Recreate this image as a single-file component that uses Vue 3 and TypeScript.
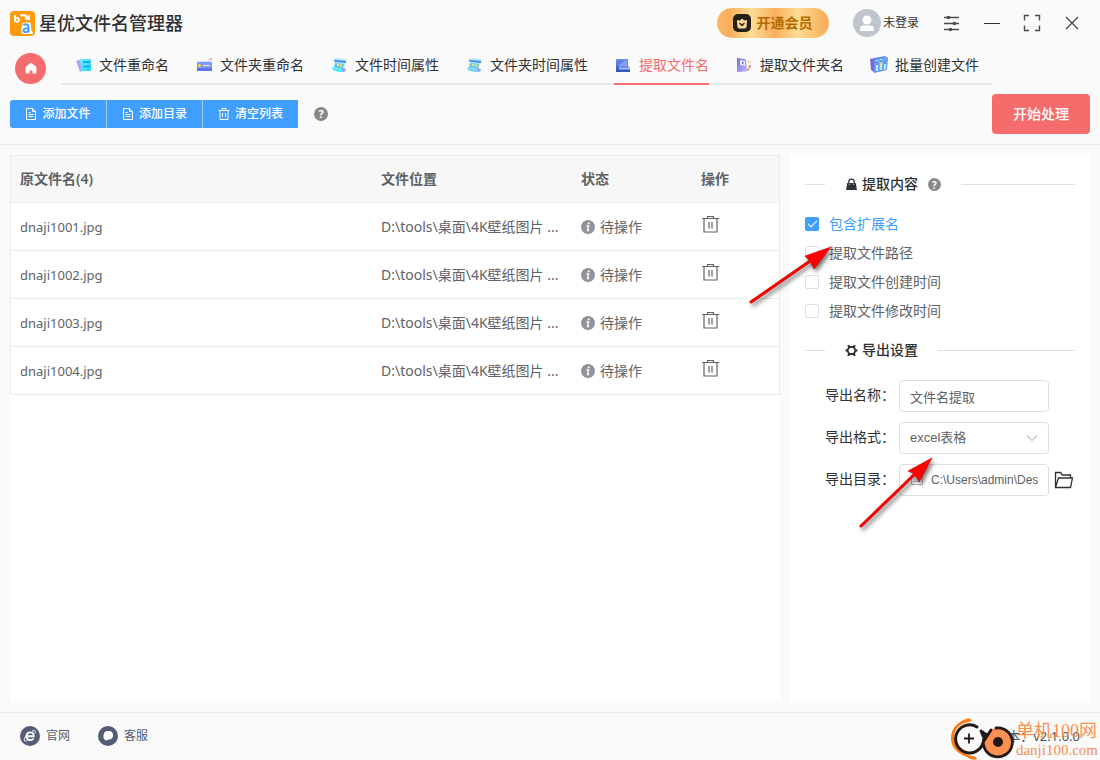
<script setup lang="ts">
import { ref } from 'vue'

interface Tab { id: string; label: string }
interface Row { name: string; path: string; status: string }
interface Option { id: string; label: string; checked: boolean }

const tabs: Tab[] = [
  { id: 'rename', label: '文件重命名' },
  { id: 'folder', label: '文件夹重命名' },
  { id: 'time', label: '文件时间属性' },
  { id: 'foldertime', label: '文件夹时间属性' },
  { id: 'extract', label: '提取文件名' },
  { id: 'extractfolder', label: '提取文件夹名' },
  { id: 'create', label: '批量创建文件' },
]
const active = ref('extract')

const rows = ref<Row[]>(
  ['dnaji1001.jpg', 'dnaji1002.jpg', 'dnaji1003.jpg', 'dnaji1004.jpg'].map((name) => ({
    name,
    path: 'D:\\tools\\桌面\\4K壁纸图片 ...',
    status: '待操作',
  })),
)

const options = ref<Option[]>([
  { id: 'ext', label: '包含扩展名', checked: true },
  { id: 'path', label: '提取文件路径', checked: false },
  { id: 'ctime', label: '提取文件创建时间', checked: false },
  { id: 'mtime', label: '提取文件修改时间', checked: false },
])

const exportName = ref('文件名提取')
const exportFormat = ref('excel')
const exportDir = ref('C:\\Users\\admin\\Des')

function removeRow(index: number) {
  rows.value.splice(index, 1)
}
</script>

<template>
  <div class="app">
    <header class="titlebar">
      <svg class="logo" viewBox="0 0 25 25" aria-hidden="true">
        <rect width="25" height="25" rx="4" fill="#ff9c0a" />
        <path d="M5 4v7M5 8.800a2 2 0 1 1 0 .1" fill="none" stroke="#fff" stroke-width="1.800" />
        <path d="M10.500 4.800c3-1.200 5.500-.5 7 2" fill="none" stroke="#fff" stroke-width="2.200" />
        <path d="M14 8l6 1.500V3.500z" fill="#fff" />
        <path d="M13 11.500h7.500l1 8.500 1.500 1v2H12l-1-5 1-3z" fill="#fff" />
        <path d="M13.500 14.200c2-1.500 5-1 5 1.300v6M18.500 17.200c-3-.3-5 .5-5 2.200 0 2.200 3.600 2.300 5 .3" fill="none" stroke="#409eff" stroke-width="2" />
      </svg>
      <h1 class="title">星优文件名管理器</h1>
      <button class="vip" type="button">
        <svg viewBox="0 0 18 18" aria-hidden="true">
          <rect width="18" height="18" rx="5" fill="#252117" />
          <path d="M4.500 6.500l2.300.5L9 5l2.200 2 2.300-.5-.5 6.500q-.1 1-1 1H6q-.9 0-1-1z" fill="#fbd79a" stroke="#fbd79a" stroke-linejoin="round" />
          <path d="M7 9.500l2 2 2-2" fill="none" stroke="#252117" stroke-width="1.500" stroke-linecap="round" />
        </svg>
        <span>开通会员</span>
      </button>
      <button class="user" type="button">
        <svg viewBox="0 0 28 28" aria-hidden="true">
          <circle cx="14" cy="14" r="14" fill="#c0c4cc" />
          <circle cx="14" cy="11" r="4.500" fill="#fff" />
          <path d="M7 21v-1.500q0-3 3-3h8q3 0 3 3V21q0 1-1 1H8q-1 0-1-1z" fill="#fff" />
        </svg>
        <span>未登录</span>
      </button>
      <div class="controls">
        <button type="button" aria-label="设置">
          <svg viewBox="0 0 20 20"><path d="M2 4.500h15M2 10.500h15M2 16.500h15" stroke="#4a4c50" stroke-width="1.300" /><circle cx="6.500" cy="4.500" r="1.800" fill="#4a4c50" /><circle cx="12.500" cy="10.500" r="1.800" fill="#4a4c50" /><circle cx="8.500" cy="16.500" r="1.800" fill="#4a4c50" /></svg>
        </button>
        <button type="button" aria-label="最小化">
          <svg viewBox="0 0 20 20"><path d="M2 10.500h16" stroke="#303133" /></svg>
        </button>
        <button type="button" aria-label="最大化">
          <svg viewBox="0 0 20 20"><path d="M2.500 7.500V2.500h4.500M13 2.500h4.500v5M17.500 12.500v5h-4.500M7 17.500H2.500v-5" fill="none" stroke="#4a4c50" stroke-width="1.400" /></svg>
        </button>
        <button type="button" aria-label="关闭">
          <svg viewBox="0 0 20 20"><path d="M4 4l12 12M16 4L4 16" stroke="#404246" stroke-width="1.200" /></svg>
        </button>
      </div>
    </header>

    <nav class="nav">
      <button class="home" type="button" aria-label="首页">
        <svg viewBox="0 0 12 12"><path d="M6 .5L.6 5v5.500q0 1 1 1H4.500V8.500h3v3h2.900q1 0 1-1V5z" fill="#fff" /></svg>
      </button>
      <div class="tabs" role="tablist">
        <button
          v-for="tab in tabs" :key="tab.id" class="tab" :class="{ active: tab.id === active }"
          type="button" role="tab" :aria-selected="tab.id === active" @click="active = tab.id"
        >
          <span class="tab-inner">
            <svg viewBox="0 0 18 18" aria-hidden="true">
              <defs>
                <linearGradient id="cyan" x1="0" y1="0" x2="1" y2="1"><stop offset="0" stop-color="#69f5ff" /><stop offset="1" stop-color="#1bd4fa" /></linearGradient>
                <linearGradient id="blue" x1="0" y1="0" x2="0" y2="1"><stop offset="0" stop-color="#7093fa" /><stop offset="1" stop-color="#2f4db4" /></linearGradient>
                <linearGradient id="violet" x1="0" y1="0" x2="1" y2="1"><stop offset="0" stop-color="#7665df" /><stop offset="1" stop-color="#b9bbff" /></linearGradient>
              </defs>
              <template v-if="tab.id === 'rename'">
                <path d="M2 5l6-2 3 9-5 4z" fill="#a8a8fb" />
                <path d="M8 3h8q1 0 1 1v9.500Q17 15 15 15H7q1-1 1-3L6 5q0-2 2-2z" fill="url(#cyan)" />
                <path d="M9 6h7M9.500 10.500h6" stroke="#1596dc" stroke-width="1.300" />
              </template>
              <template v-else-if="tab.id === 'folder'">
                <path d="M2 5h10l1-2h4v5H2z" fill="#dfe2fd" />
                <path d="M14 3h3" stroke="#f6b0aa" stroke-width="1.500" />
                <rect x="2" y="6" width="15" height="9" rx="1" fill="#7699fa" />
                <path d="M2 12h15v3H2z" fill="#6572ee" />
                <circle cx="4.500" cy="9.500" r="1.500" fill="#ffdc27" />
                <path d="M8 9.500h7" stroke="#f0dfb0" stroke-width="1.300" />
              </template>
              <template v-else-if="tab.id === 'time' || tab.id === 'foldertime'">
                <path d="M5 2l10 1q2 0 1 2l-2 6H4l1-5Q3 3 5 2z" fill="#b9e4fc" />
                <path d="M4 4l12 1v2L4 5.500z" fill="#318ee1" />
                <path d="M5 7l9 1-1 5-9-1z" fill="#65c9f2" />
                <path d="M7 9h2M11 8.500v2" stroke="#ffe06b" stroke-width="2" />
                <path d="M2 11q4 3 11 1l3 3q-5 2-11 0-3-1-3-4z" :fill="tab.id === 'time' ? '#42eff6' : '#7fd5f5'" />
                <path d="M12 12q4 0 4 2l-2 2q-2 0-2-4z" fill="#a69bf5" />
              </template>
              <template v-else-if="tab.id === 'extract'">
                <path d="M2 3h12v7l2 2v4H2z" fill="url(#blue)" />
                <path d="M4.500 4.500h9v6h-9z" fill="#829ffa" />
                <path d="M4.500 4.500h6l-6 5z" fill="#5c78da" />
                <path d="M5 11.500h11v2H5z" fill="#aabfff" />
                <path d="M2 14h14v2H3z" fill="#3159c4" />
              </template>
              <template v-else-if="tab.id === 'extractfolder'">
                <path d="M12 5q5 0 4 3t-1 6l-4 2z" fill="#fff0e8" />
                <path d="M12.500 5.500l3 1" stroke="#f5cf7a" stroke-width="1.800" />
                <path d="M15 9l-.5 3M12 14l2-1" stroke="#ee706c" stroke-width="1.500" />
                <path d="M2 2l9 1.500 1 12-10 .5z" fill="url(#violet)" />
                <path d="M5 4l5 1v5L5 9z" fill="#eef0ff" />
                <path d="M7 5.500l1.500.5v2.500L7 8z" fill="#7768d8" />
              </template>
              <template v-else>
                <path d="M0 3l5-1v15l-4-3z" fill="#8067d8" />
                <path d="M4 2l11-2 3 2-1 12-13 3z" fill="#658df1" />
                <path d="M7 4v11M11 3v11M15 2.500v11" stroke="#a9edff" stroke-width="2.600" />
                <path d="M7 5v4M11 4v4M15 3v5" stroke="#387edb" stroke-width="1.500" />
                <path d="M11 6v5" stroke="#ffe278" stroke-width="1.500" />
              </template>
            </svg>
            <span>{{ tab.label }}</span>
          </span>
        </button>
      </div>
    </nav>

    <div class="toolbar">
      <div class="btn-group">
        <button v-for="label in ['添加文件', '添加目录']" :key="label" type="button">
          <svg viewBox="0 0 12 12" aria-hidden="true"><path d="M1.500.5h6l3 3v8h-9zM7.500.5v3h3M3.500 4.500h2M3.500 6.500h5M3.500 8.500h5" fill="none" stroke="#fff" /></svg>
          <span>{{ label }}</span>
        </button>
        <button type="button">
          <svg viewBox="0 0 12 12" aria-hidden="true"><path d="M.5 2.500h11M4 2.500v-2h4v2M2 2.500v9h8v-9M4.500 5v4M7.500 5v4" fill="none" stroke="#fff" /></svg>
          <span>清空列表</span>
        </button>
      </div>
      <span class="help">?</span>
      <button class="start" type="button">开始处理</button>
    </div>

    <main class="main">
      <section class="list">
        <table>
          <colgroup><col /><col class="c-path" /><col class="c-status" /><col class="c-action" /></colgroup>
          <thead>
            <tr><th>原文件名({{ rows.length }})</th><th>文件位置</th><th>状态</th><th>操作</th></tr>
          </thead>
          <tbody>
            <tr v-for="(row, i) in rows" :key="row.name">
              <td class="name">{{ row.name }}</td>
              <td>{{ row.path }}</td>
              <td>
                <span class="status">
                  <svg viewBox="0 0 14 14" aria-hidden="true"><circle cx="7" cy="7" r="7" fill="#909399" /><circle cx="7.800" cy="3.500" r="1.100" fill="#fff" /><path d="M5.500 6h2l-1 4.500h1.700" fill="none" stroke="#fff" stroke-width="1.400" /></svg>
                  <span>{{ row.status }}</span>
                </span>
              </td>
              <td>
                <button class="trash" type="button" :aria-label="'删除 ' + row.name" @click="removeRow(i)">
                  <svg viewBox="0 0 18 18"><path d="M1 3.500h17M6.500 3.500v-2h6v2M3 3.500v13.500h13V3.500M8 7v6.500M11 7v6.500" fill="none" stroke="#606266" stroke-width="1.200" /></svg>
                </button>
              </td>
            </tr>
          </tbody>
        </table>
      </section>

      <aside class="panel">
        <h2 class="divider">
          <span class="divider-text">
            <svg viewBox="0 0 12 12" aria-hidden="true"><path d="M3.500 5V3.500a2.500 2.500 0 0 1 5 0V5" fill="none" stroke="#303133" stroke-width="1.200" /><path d="M2 4.500h8l1 6.500H1z" fill="#303133" /><path d="M4 5v1.500M8 5v1.500" stroke="#aaa" /></svg>
            <span>提取内容</span>
            <span class="help small">?</span>
          </span>
        </h2>
        <div class="checks">
          <label v-for="o in options" :key="o.id" :class="{ on: o.checked }">
            <input v-model="o.checked" type="checkbox" />
            <span>{{ o.label }}</span>
          </label>
        </div>
        <h2 class="divider">
          <span class="divider-text">
            <svg viewBox="0 0 12 12" aria-hidden="true"><path d="M4 2.800h4L9.900 6 8 9.200H4L2.100 6z" fill="none" stroke="#303133" stroke-width="1.700" stroke-linejoin="round" /><path d="M3.800 2.800L3 1M8.200 2.800L9 1M3.800 9.200L3 11M8.200 9.200L9 11M2 6H.5M10 6h1.500" stroke="#303133" stroke-width="2" /></svg>
            <span>导出设置</span>
          </span>
        </h2>
        <div class="form">
          <div class="field">
            <label for="export-name">导出名称：</label>
            <input id="export-name" v-model="exportName" class="box" type="text" />
          </div>
          <div class="field">
            <label for="export-format">导出格式：</label>
            <div class="wrap">
              <select id="export-format" v-model="exportFormat" class="box">
                <option value="excel">excel表格</option>
              </select>
              <svg class="chevron" viewBox="0 0 12 12" aria-hidden="true"><path d="M1 3.500l5 5 5-5" fill="none" stroke="#c0c4cc" stroke-width="1.200" /></svg>
            </div>
          </div>
          <div class="field">
            <label for="export-dir">导出目录：</label>
            <div class="wrap">
              <input id="export-dir" v-model="exportDir" class="box dir" type="text" />
              <svg class="prefix" viewBox="0 0 12 12" aria-hidden="true"><path d="M.5 1.500h4l1 1.500h6v7.500H.5zM3 7.500h6" fill="none" stroke="#b4b7bd" /></svg>
            </div>
            <button class="browse" type="button" aria-label="选择目录">
              <svg viewBox="0 0 20 18"><path d="M1.500 16.500V1.500h5l2 2.500h8v3M1.500 16.500l3-9.500h14l-2 9.500z" fill="none" stroke="#303133" stroke-width="1.300" /></svg>
            </button>
          </div>
        </div>
      </aside>
    </main>

    <footer class="footer">
      <a href="#site">
        <svg viewBox="0 0 20 20" aria-hidden="true"><circle cx="10" cy="10" r="10" fill="#535d75" /><path d="M6.500 10.300h7.300c.2-5-6.700-5.300-7.300-.3-.3 4.800 5.500 5 6.800 2.300" fill="none" stroke="#fff" stroke-width="1.900" /><path d="M12 5.200c3-1.500 4.200-.3 3 2M6.500 9c-3 4-3.500 7.500 1 5.500" fill="none" stroke="#fff" /></svg>
        <span>官网</span>
      </a>
      <a href="#service">
        <svg viewBox="0 0 20 20" aria-hidden="true"><circle cx="10" cy="10" r="10" fill="#535d75" /><path d="M9 5h3q3.500 1 3 5-.5 3.500-4.500 3.500l-2.500 1-1.500-1Q5 12 5.500 9 6 5.500 9 5z" fill="#fff" /></svg>
        <span>客服</span>
      </a>
      <span class="version">版本：v2.1.0.0</span>
      <div class="mark">
        <svg viewBox="0 0 66 44" aria-hidden="true">
          <path d="M22 5Q20 1 16 3 1 9 1 22t16 19q5 4 10 2l-1-2Q5 37 4 22 4 8 22 5z" fill="#ff7a12" />
          <path d="M27 11A14 14 0 1 0 33 27M33 16q3 3 3 9" fill="none" stroke="#231815" stroke-width="3" stroke-linecap="round" />
          <path d="M19 17.500v10M14 22.500h10" stroke="#231815" stroke-width="1.800" />
          <circle cx="48" cy="26" r="14" fill="#fd914f" />
          <path d="M31 15l2 5M41 14l-7 11M46 12A14.500 14.500 0 1 1 36 18" fill="none" stroke="#231815" stroke-width="2.800" stroke-linecap="round" />
          <circle cx="48" cy="26" r="5" fill="#231815" />
        </svg>
        <div class="mark-text"><span class="mark-name">单机100网</span><span class="mark-url">danji100.com</span></div>
      </div>
    </footer>

    <svg class="arrow first" viewBox="0 0 100 80" aria-hidden="true">
      <path d="M10 65L72 22" stroke="#d40000" stroke-width="3" stroke-linecap="round" />
      <path d="M90 10L64 19l5 5 4 8z" fill="#f00" stroke="#c00000" stroke-width=".6" />
      <path d="M10 65L72 22" stroke="#f00" stroke-width="2" stroke-linecap="round" />
    </svg>
    <svg class="arrow second" viewBox="0 0 100 90" aria-hidden="true">
      <path d="M11 78L67 24" stroke="#d40000" stroke-width="3" stroke-linecap="round" />
      <path d="M82 10L58 23l7 3 4 8z" fill="#f00" stroke="#c00000" stroke-width=".6" />
      <path d="M11 78L67 24" stroke="#f00" stroke-width="2" stroke-linecap="round" />
    </svg>
  </div>
</template>

<style>
body { background: #fafafa; }
</style>

<style scoped>
.app {
  position: relative;
  display: flex;
  flex-direction: column;
  box-sizing: border-box;
  min-height: 100vh;
  overflow: hidden;
  background: #fafafa;
  color: #303133;
  font: 14px/20px "Noto Sans", "Noto Sans CJK SC", sans-serif;
}
.app *, .app *::before, .app *::after { box-sizing: border-box; }
svg { display: block; flex: none; }
button { padding: 0; border: 0; background: none; color: inherit; font: inherit; cursor: pointer; }
h1, h2 { margin: 0; }

.titlebar { display: flex; align-items: center; height: 48px; padding: 0 8px 2px 10px; }
.logo { width: 25px; height: 25px; }
.title { flex: 1; margin-left: 4px; font-size: 18px; line-height: 24px; font-weight: 500; }
.vip {
  display: flex; align-items: center; justify-content: center; gap: 5px;
  width: 112px; height: 30px; border-radius: 15px;
  background: linear-gradient(90deg, #fbb766, #f9ae5d 11%, #fddd94 31%, #f9ae5d 52%, #fddd94 72%, #f9b15f 95%);
  color: #b56a00; font-weight: 600;
}
.vip svg { width: 18px; height: 18px; }
.user { display: flex; align-items: center; gap: 2px; margin: 0 13px 0 24px; font-size: 12px; }
.user svg { width: 28px; height: 28px; }
.controls { display: flex; }
.controls button { display: grid; place-items: center; width: 40px; height: 40px; }
.controls svg { width: 20px; height: 20px; }

.nav { display: flex; align-items: center; gap: 15px; padding: 0 15px; height: 40px; }
.home { display: grid; place-items: center; width: 31px; height: 31px; border-radius: 50%; background: #f56c6c; }
.home svg { width: 12px; height: 12px; }
.tabs { display: flex; height: 34px; border-bottom: 2px solid #e4e7ed; }
.tab { height: 34px; padding: 0 13px; white-space: nowrap; }
.tab-inner { display: flex; align-items: center; gap: 7px; height: 34px; padding-bottom: 4px; border-bottom: 2px solid transparent; }
.tab-inner svg { width: 18px; height: 18px; }
.active .tab-inner { border-color: #f56c6c; color: #f56c6c; }

.toolbar { display: flex; align-items: center; height: 57px; padding: 0 10px 5px; border-bottom: 1px solid #ebebeb; }
.btn-group { display: flex; border-radius: 3px 0 0 3px; overflow: hidden; }
.btn-group button {
  display: flex; align-items: center; justify-content: center; gap: 5px;
  width: 96px; height: 28px; background: #409eff; color: #fff; font-size: 12px; font-weight: 500;
}
.btn-group button + button { border-left: 1px solid #a0cfff; }
.btn-group svg { width: 12px; height: 12px; }
.help {
  display: grid; place-items: center; width: 14px; height: 14px; margin-left: 16px;
  border-radius: 50%; background: #888; color: #fff; font-size: 11px; line-height: 14px; font-weight: 700;
}
.help.small { width: 13px; height: 13px; margin-left: 6px; font-size: 10px; }
.start { width: 98px; height: 40px; margin-left: auto; border-radius: 4px; background: #f56c6c; color: #fff; font-weight: 500; }

.main { display: flex; flex: 1; gap: 10px; padding: 10px 10px 11px; }
.list { flex: 1; min-width: 0; background: #fff; }
table {
  width: 100%; border: 1px solid #ebebeb; border-bottom: 0; border-collapse: separate; border-spacing: 0;
  table-layout: fixed; color: #606266;
}
.c-path { width: 200px; }
.c-status { width: 120px; }
.c-action { width: 88px; }
th, td { height: 48px; padding: 0 10px; border-bottom: 1px solid #ebebeb; text-align: left; white-space: nowrap; }
th { height: 47px; background: #f7f7f7; font-weight: 600; }
th:first-child, td:first-child { padding-left: 9px; }
.name { font-size: 13px; }
.status { display: flex; align-items: center; gap: 5px; }
.status svg { width: 14px; height: 14px; }
.trash { display: block; margin-bottom: 5px; }
.trash svg { width: 18px; height: 18px; }

.panel { width: 300px; padding: 18px 15px; background: #fff; }
.divider { display: flex; align-items: center; height: 22px; font-size: 14px; line-height: 20px; font-weight: 500; }
.divider::before, .divider::after { content: ""; height: 1px; background: #dcdfe6; }
.divider::before { width: 20px; }
.divider::after { flex: 1; }
.divider-text { display: flex; align-items: center; gap: 4px; padding: 0 20px; }
.divider-text svg { width: 13px; height: 13px; }
.checks { display: flex; flex-direction: column; gap: 9px; padding: 19px 0 18px; }
.checks label { display: flex; align-items: center; gap: 10px; color: #606266; }
.checks .on { color: #409eff; }
.checks input {
  display: grid; place-items: center; width: 14px; height: 14px; margin: 0;
  appearance: none; border: 1px solid #dcdfe6; border-radius: 2px; background: #fff;
}
.checks input:checked { border-color: #409eff; background: #409eff; }
.checks input:checked::after {
  content: ""; width: 9px; height: 5px; margin-bottom: 3px;
  border: solid #fff; border-width: 0 0 1px 1px; transform: rotate(-45deg);
}
.form { display: flex; flex-direction: column; gap: 10px; padding: 19px 0 0 20px; }
.field { display: flex; align-items: center; height: 32px; }
.field label { width: 74px; padding-bottom: 2px; white-space: nowrap; }
.box {
  display: block; width: 150px; height: 32px; padding: 0 10px; border: 1px solid #dcdfe6; border-radius: 4px;
  appearance: none; background: #fff; color: #606266;
  font: 13px/20px "Liberation Sans", "Noto Sans CJK SC", sans-serif;
}
.wrap { position: relative; }
.dir { padding-left: 31px; font-size: 12px; }
.chevron { position: absolute; top: 10px; right: 11px; width: 12px; height: 12px; }
.prefix { position: absolute; top: 10px; left: 12px; width: 12px; height: 12px; }
.browse { margin-left: 5px; }
.browse svg { width: 20px; height: 18px; }

.footer { position: relative; display: flex; align-items: center; gap: 28px; height: 48px; padding: 0 20px 1px; border-top: 1px solid #ebebeb; }
.footer a { display: flex; align-items: center; gap: 6px; color: #535d75; font-size: 12px; text-decoration: none; }
.footer a svg { width: 20px; height: 20px; }
.version { margin-left: auto; font-size: 13px; color: #535353; }
.mark { position: absolute; right: 2px; bottom: 0; display: flex; align-items: center; color: #fb8f4e; }
.mark svg { width: 66px; height: 44px; }
.mark-text { display: flex; flex-direction: column; padding-top: 4px; font-family: "Liberation Serif", "Noto Sans CJK SC", serif; white-space: nowrap; }
.mark-name { font-size: 18px; line-height: 20px; }
.mark-url { font-size: 15px; line-height: 18px; }

.arrow { position: absolute; pointer-events: none; fill: none; filter: drop-shadow(2px 3px 2px #0008); }
.first { left: 741px; top: 237px; width: 100px; height: 80px; }
.second { left: 850px; top: 448px; width: 100px; height: 90px; }
</style>
